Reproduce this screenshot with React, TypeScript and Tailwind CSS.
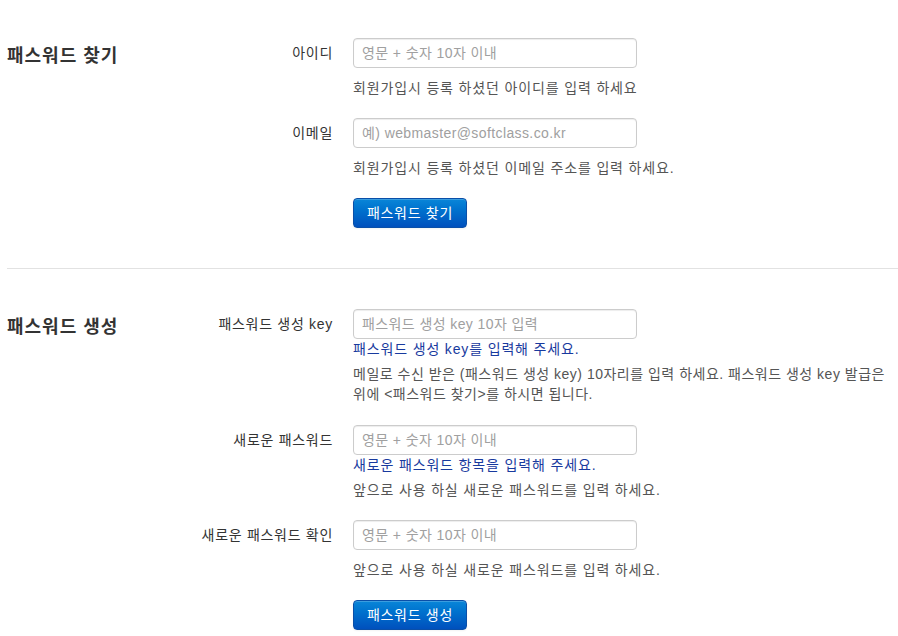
import React from "react";

const font = { fontFamily: '"Liberation Sans", "Noto Sans CJK KR", sans-serif' };

function Input({ placeholder }: { placeholder: string }) {
  return (
    <input
      type="text"
      placeholder={placeholder}
      className="block w-[284px] h-[30px] px-2 border border-[#cccccc] rounded-[4px] bg-white text-[14px] leading-[20px] tracking-[0.4px] text-[#555] placeholder:text-[#a0a0a0] shadow-[inset_0_1px_1px_rgba(0,0,0,0.075)] outline-none"
    />
  );
}

function Row({
  label,
  children,
  className = "",
}: {
  label: string;
  children: React.ReactNode;
  className?: string;
}) {
  return (
    <div className={`flex ${className}`}>
      <div className="w-[160px] shrink-0 text-right pt-[5px] text-[14px] leading-[20px] tracking-[0.7px] text-[#333]">
        {label}
      </div>
      <div className="ml-[20px] flex-1">{children}</div>
    </div>
  );
}

function Button({ children }: { children: React.ReactNode }) {
  return (
    <button className="w-[114px] h-[30px] rounded-[4px] border border-[#0a4fa8] bg-gradient-to-b from-[#0a86d8] to-[#0050bd] text-white text-[14px] leading-[20px] tracking-[0.7px] shadow-[inset_0_1px_0_rgba(255,255,255,0.2),0_1px_2px_rgba(0,0,0,0.05)]">
      {children}
    </button>
  );
}

const help = "text-[14px] leading-[20px] tracking-[0.85px] text-[#555]";
const blue = "text-[14px] leading-[20px] tracking-[0.85px] text-[#183a9e]";

export default function App() {
  return (
    <div className="bg-white w-[898px] h-[636px] overflow-hidden pl-[7px] pt-[38px]" style={font}>
      {/* Section 1 */}
      <div className="flex">
        <div className="w-[166px] shrink-0 pt-[8px]">
          <h2 className="text-[18px] leading-[20px] font-bold tracking-[1px] text-[#333]">패스워드 찾기</h2>
        </div>
        <div className="flex-1">
          <Row label="아이디">
            <Input placeholder="영문 + 숫자 10자 이내" />
            <div className={`${help} mt-[10px]`}>회원가입시 등록 하셨던 아이디를 입력 하세요</div>
          </Row>
          <Row label="이메일" className="mt-[20px]">
            <Input placeholder="예) webmaster@softclass.co.kr" />
            <div className={`${help} mt-[10px]`}>회원가입시 등록 하셨던 이메일 주소를 입력 하세요.</div>
          </Row>
          <div className="flex mt-[20px]">
            <div className="w-[160px] shrink-0" />
            <div className="ml-[20px]">
              <Button>패스워드 찾기</Button>
            </div>
          </div>
        </div>
      </div>

      <div className="border-t border-[#e2e2e2] mt-[40px] mb-[40px]" />

      {/* Section 2 */}
      <div className="flex">
        <div className="w-[166px] shrink-0 pt-[8px]">
          <h2 className="text-[18px] leading-[20px] font-bold tracking-[1px] text-[#333]">패스워드 생성</h2>
        </div>
        <div className="flex-1">
          <Row label="패스워드 생성 key">
            <Input placeholder="패스워드 생성 key 10자 입력" />
            <div className={blue}>패스워드 생성 key를 입력해 주세요.</div>
            <div className="text-[14px] leading-[20px] text-[#555] mt-[5px] whitespace-nowrap tracking-[0.5px]">
              메일로 수신 받은 (패스워드 생성 key) 10자리를 입력 하세요. 패스워드 생성 key 발급은
              <br />
              위에 &lt;패스워드 찾기&gt;를 하시면 됩니다.
            </div>
          </Row>
          <Row label="새로운 패스워드" className="mt-[21px]">
            <Input placeholder="영문 + 숫자 10자 이내" />
            <div className={blue}>새로운 패스워드 항목을 입력해 주세요.</div>
            <div className={`${help} mt-[5px]`}>앞으로 사용 하실 새로운 패스워드를 입력 하세요.</div>
          </Row>
          <Row label="새로운 패스워드 확인" className="mt-[20px]">
            <Input placeholder="영문 + 숫자 10자 이내" />
            <div className={`${help} mt-[10px]`}>앞으로 사용 하실 새로운 패스워드를 입력 하세요.</div>
          </Row>
          <div className="flex mt-[20px]">
            <div className="w-[160px] shrink-0" />
            <div className="ml-[20px]">
              <Button>패스워드 생성</Button>
            </div>
          </div>
        </div>
      </div>
    </div>
  );
}
